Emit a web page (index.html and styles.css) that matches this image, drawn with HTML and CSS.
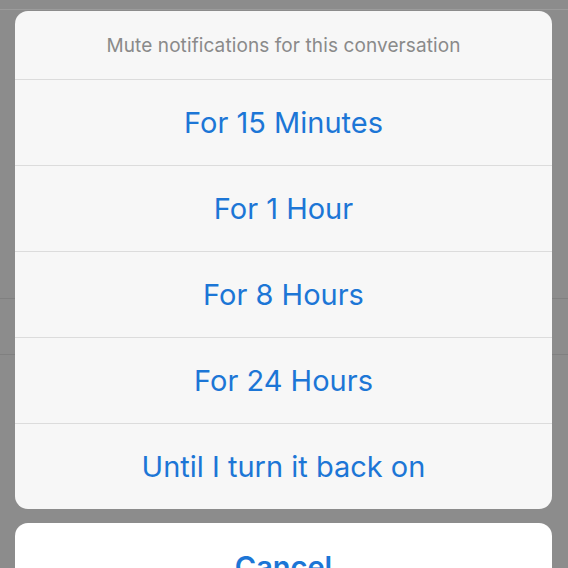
FILE: index.html
```html
<!DOCTYPE html>
<html lang="en">
<head>
    <meta charset="UTF-8">
    <meta name="viewport" content="width=device-width, initial-scale=1.0">
    <title>Mute notifications</title>
    <link rel="stylesheet" href="styles.css">
</head>
<body>
    <div id="overlay">
        <div class="sheet">
            <div class="sheetTitle">Mute notifications for this conversation</div>
            <button class="sheetOption">For 15 Minutes</button>
            <button class="sheetOption">For 1 Hour</button>
            <button class="sheetOption">For 8 Hours</button>
            <button class="sheetOption">For 24 Hours</button>
            <button class="sheetOption">Until I turn it back on</button>
        </div>

        <div class="sheet cancelSheet">
            <button class="sheetOption cancelBtn">Cancel</button>
        </div>
    </div>
</body>
</html>
```

FILE: styles.css
```css
body {
    margin: 0;
    height: 568px;
    overflow: hidden;
    font-family: Inter, "Noto Sans", sans-serif;
    background-color: rgb(140, 140, 140);
    background-image:
        linear-gradient(rgb(155, 155, 155), rgb(155, 155, 155)),
        linear-gradient(rgb(128, 128, 128), rgb(128, 128, 128)),
        linear-gradient(rgb(128, 128, 128), rgb(128, 128, 128));
    background-size: 100% 1px, 100% 1px, 100% 1px;
    background-position: 0 9px, 0 298px, 0 354px;
    background-repeat: no-repeat;
}

#overlay {
    display: flex;
    flex-direction: column;
    gap: 14px;
    padding: 11px 16px 0px 15px;
}

.sheet {
    display: flex;
    flex-direction: column;
    background-color: rgb(247, 247, 247);
    border-radius: 13px;
    overflow: hidden;
}

.sheetTitle {
    height: 68px;
    display: flex;
    align-items: center;
    justify-content: center;
    font-size: 19px;
    letter-spacing: 0.1px;
    color: rgb(138, 138, 138);
}

.sheetOption {
    height: 86px;
    border: none;
    border-top: 1px solid rgb(220, 220, 220);
    background: none;
    padding: 0px;
    font-family: inherit;
    font-size: 29px;
    color: rgb(28, 118, 214);
    cursor: pointer;
}

.cancelSheet {
    background-color: white;
}

.cancelBtn {
    border-top: none;
    font-weight: 600;
}
```
